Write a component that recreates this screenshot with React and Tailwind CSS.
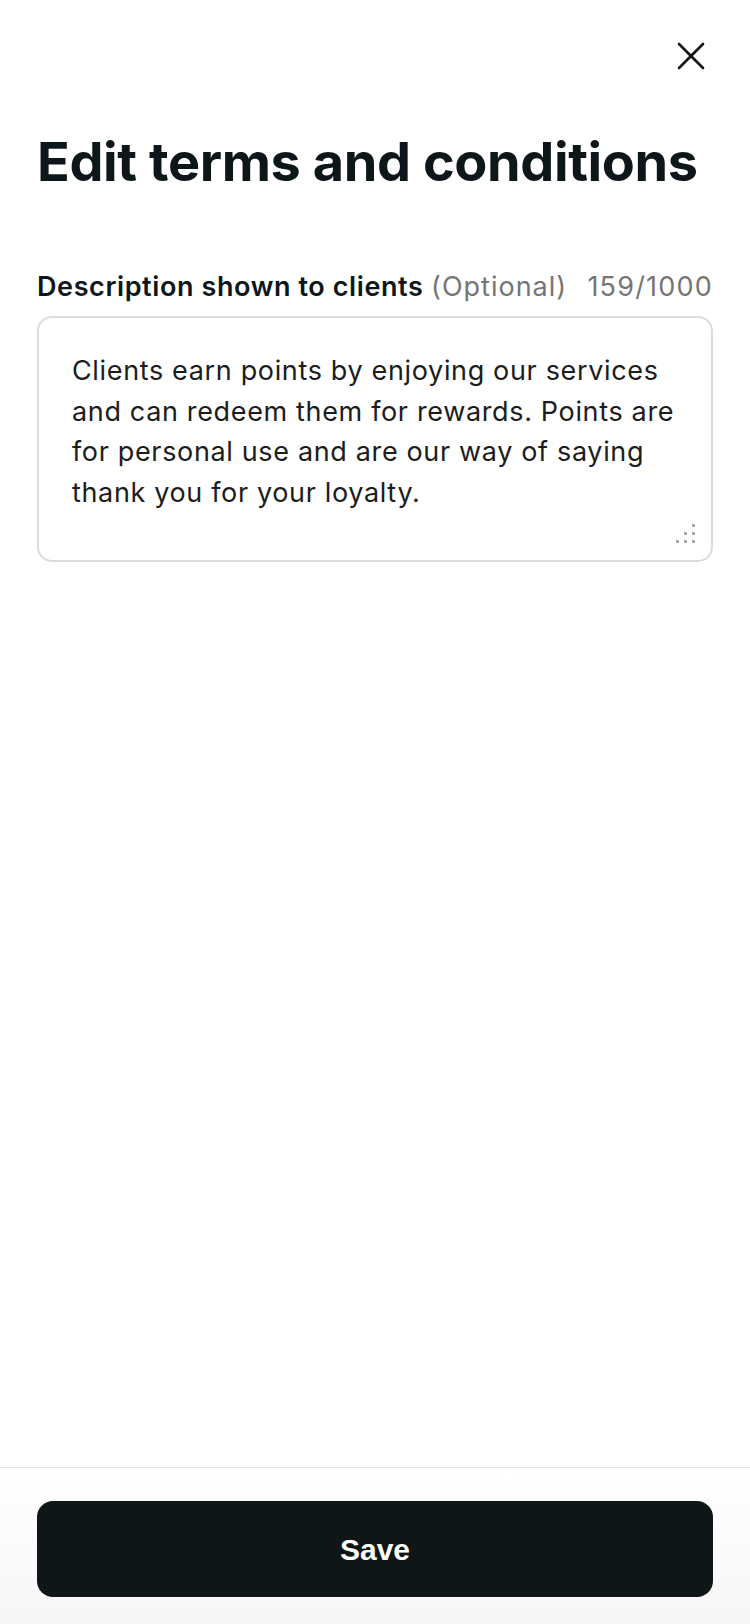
export default function App() {
  const lines = [
    'Clients earn points by enjoying our services',
    'and can redeem them for rewards. Points are',
    'for personal use and are our way of saying',
    'thank you for your loyalty.',
  ]

  return (
    <div className="flex flex-col h-[1624px] bg-white text-[#0d1619] font-['Inter','Liberation_Sans',sans-serif]">
      {/* Close */}
      <div className="flex justify-end pt-[42px] pr-[45px]">
        <button className="w-[28px] h-[28px] text-[#111]">
          <svg width="28" height="28" viewBox="0 0 28 28" fill="none" stroke="currentColor" strokeWidth="2.6" strokeLinecap="round">
            <path d="M2 2 26 26M26 2 2 26" />
          </svg>
        </button>
      </div>

      <h1 className="mt-[60px] px-[37px] text-[54px] leading-[64px] font-bold tracking-[-0.4px] whitespace-nowrap">
        Edit terms and conditions
      </h1>

      {/* Field */}
      <div className="mt-[76px] px-[37px] flex items-baseline justify-between text-[27px] leading-[34px] whitespace-nowrap">
        <div>
          <span className="font-semibold tracking-[0.6px]">Description shown to clients</span>{' '}
          <span className="text-[#757575] tracking-[1px]">(Optional)</span>
        </div>
        <span className="text-[#757575] tracking-[1.2px]">159/1000</span>
      </div>

      <div className="relative mt-[12px] mx-[37px] h-[246px] rounded-[15px] border-2 border-[#dcdcdc] pt-[33px] pl-[33px] text-[27px] leading-[40.5px] tracking-[0.65px] text-[#1c1c1c]">
        {lines.map(l => (
          <div key={l} className="whitespace-nowrap">{l}</div>
        ))}
        <svg className="absolute right-[15px] bottom-[17px]" width="20" height="20" viewBox="0 0 20 20" fill="#a8a8a8">
          <rect x="16" y="1" width="3" height="3" />
          <rect x="8" y="9" width="3" height="3" />
          <rect x="16" y="9" width="3" height="3" />
          <rect x="0" y="17" width="3" height="3" />
          <rect x="8" y="17" width="3" height="3" />
          <rect x="16" y="17" width="3" height="3" />
        </svg>
      </div>

      <div className="flex-1" />

      {/* Footer */}
      <div className="border-t border-[#e6e6e6] bg-gradient-to-b from-white to-[#f6f6f6] px-[37px] pt-[33px] pb-[27px]">
        <button className="w-full h-[96px] rounded-[16px] bg-[#0f1618] text-white text-[30px] font-bold font-['Liberation_Sans',sans-serif]">
          Save
        </button>
      </div>
    </div>
  )
}
